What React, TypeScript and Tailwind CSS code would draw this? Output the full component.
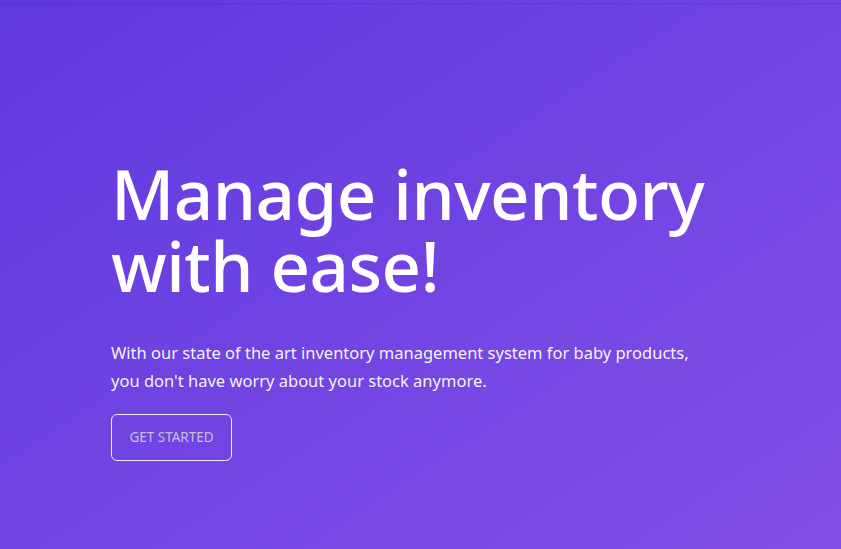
export default function App() {
  return (
    <div className="relative h-[549px] w-full overflow-hidden bg-gradient-to-br from-[#5e38df] to-[#844fe6] font-['Noto_Sans',sans-serif] text-white">
      {/* faint top bar edge */}
      <div className="h-[4px] w-full border-b border-black/10" />
      <div className="pl-[111px] pt-[153px]">
        <h1 className="text-[69px] font-medium leading-[72px] tracking-[-0.5px]">
          Manage inventory
          <br />
          with ease!
        </h1>
        <p className="mt-[38px] text-[16.5px] leading-[28px] text-white/95">
          With our state of the art inventory management system for baby products,
          <br />
          you don't have worry about your stock anymore.
        </p>
        <button className="mt-[19px] h-[47px] w-[121px] rounded-[6px] border border-white/90 text-[13.5px] text-[#c7bfe4]">
          GET STARTED
        </button>
      </div>
    </div>
  );
}
